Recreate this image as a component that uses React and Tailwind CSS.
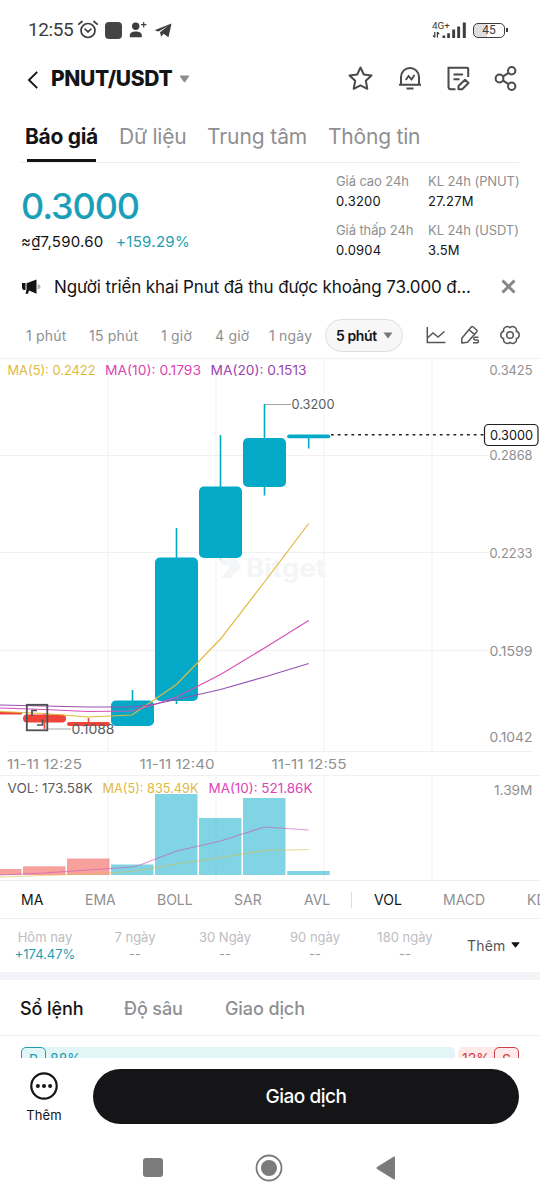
import clsx from 'clsx'

const stats = [
  { label: 'Giá cao 24h', value: '0.3200' },
  { label: 'KL 24h (PNUT)', value: '27.27M' },
  { label: 'Giá thấp 24h', value: '0.0904' },
  { label: 'KL 24h (USDT)', value: '3.5M' },
]

const periods = [
  { label: 'Hôm nay', value: '+174.47%' },
  { label: '7 ngày', value: '--' },
  { label: '30 Ngày', value: '--' },
  { label: '90 ngày', value: '--' },
  { label: '180 ngày', value: '--' },
]

// cx is the middle of the candle; top/bottom/high/low are already in chart pixels
const candles = [
  { cx: 0.5, top: 712, bottom: 714.5, high: 712, low: 714, up: false, vol: 869 },
  { cx: 44.5, top: 714.5, bottom: 722.5, high: 714, low: 729, up: false, vol: 866.3 },
  { cx: 88.5, top: 722, bottom: 726, high: 718, low: 726, up: false, vol: 858.5 },
  { cx: 132.5, top: 700.5, bottom: 726, high: 690, low: 726, up: true, vol: 864.5 },
  { cx: 176.5, top: 557.5, bottom: 701, high: 528, low: 704, up: true, vol: 794 },
  { cx: 220.5, top: 486.5, bottom: 558, high: 435, low: 558.5, up: true, vol: 818 },
  { cx: 264.5, top: 438, bottom: 487, high: 404, low: 495.5, up: true, vol: 798 },
  { cx: 308.7, top: 434.5, bottom: 438.3, high: 435, low: 448.5, up: true, vol: 871 },
]

const priceTicks = [
  { y: 375, label: '0.3425' },
  { y: 460.3, label: '0.2868' },
  { y: 558.2, label: '0.2233' },
  { y: 656, label: '0.1599' },
  { y: 741.5, label: '0.1042' },
]

function ChartText({ x, y, width, fill, children }) {
  return (
    <text x={x} y={y} fill={fill} textLength={width} lengthAdjust="spacingAndGlyphs">
      {children}
    </text>
  )
}

function StatusBar() {
  return (
    <div className="flex h-[60px] items-center pl-[28px] pr-[32px] text-[#3d3d3d]">
      <span className="w-[49px] pt-px font-[Roboto] text-[19px] tracking-[-0.4px]">12:55</span>
      <svg width="22" height="20" viewBox="0 0 22 20" fill="none" stroke="currentColor" strokeWidth="1.7" strokeLinecap="round">
        <circle cx="11" cy="10.5" r="7" />
        <path d="M1.8 4.2 5 1.5M20.2 4.2 17 1.5M8 9.2l3 2.6 3-2.6" />
      </svg>
      <span className="ml-[6px] h-[17px] w-[17px] rounded-[4px] bg-[#444]" />
      <svg className="ml-[7px]" width="18" height="18" viewBox="0 0 18 18" fill="currentColor">
        <circle cx="6.7" cy="5.2" r="3.7" />
        <path d="M.8 16.2v-1.7c0-2.8 2.5-4 6-4s6 1.2 6 4v1.7z" />
        <path d="M14.7 1v5.4M12 3.7h5.4" stroke="currentColor" strokeWidth="1.2" />
      </svg>
      <svg className="ml-[7px]" width="18" height="17" viewBox="0 0 18 17" fill="currentColor">
        <path d="M17.5 1.5 14.5 15.2 9.5 11.7 7.2 14.7 6 10.2 14 4 4.5 9.6.5 8.3z" />
      </svg>

      <div className="ml-auto flex items-center">
        <svg width="35" height="18" viewBox="0 0 35 18" fill="currentColor">
          <text x="0" y="8" fontFamily="Roboto" fontSize="9.5" textLength="18" lengthAdjust="spacingAndGlyphs">4G+</text>
          <path d="M2.8 11v5.5M1 14.5l1.8 1.8M5.4 16.5V11M7.2 13 5.4 11.3" stroke="currentColor" strokeWidth="1.2" fill="none" />
          <path d="M10.5 14.5h2.700v2.500h-2.700zM15.200 12.200h2.700v4.800h-2.700zM20.200 8.500h2.900v8.500h-2.900zM25.200 5.500h2.900v11.500h-2.900zM30.800 1.500h3v15.500h-3z" />
        </svg>
        <div className="ml-[6px] flex h-[15px] w-[32px] items-center justify-center rounded-[5px] border-[1.5px] border-[#3d3d3d] bg-linear-to-r from-[#dedede] from-45% to-white to-45% font-[Roboto] text-[12px]">
          45
        </div>
        <span className="ml-[1px] h-[4px] w-[2px] bg-[#3d3d3d]" />
      </div>
    </div>
  )
}

function Header() {
  return (
    <div className="flex h-[37px] items-center pl-[27px] pr-[22px] text-[#4a4a4d]">
      <svg className="mt-[3px]" width="12" height="20" viewBox="0 0 12 20" fill="none" stroke="#141416" strokeWidth="1.9">
        <path d="M10.200 1.800 2 10l8.200 8.200" />
      </svg>
      <span className="ml-[12px] w-[128px] text-[21px] font-extrabold tracking-[-0.35px] text-[#141416]">PNUT/USDT</span>
      <svg width="11" height="8" viewBox="0 0 11 8" fill="#8d8d90">
        <path d="M1.500.5h8q1 0 .5 1L6.300 6.800q-.8 1-1.600 0L1 1.500Q.5.5 1.500.5z" />
      </svg>

      <div className="ml-auto flex items-center gap-[24px]">
        <svg className="mr-px" width="25" height="25" viewBox="0 0 25 25" fill="none" stroke="currentColor" strokeWidth="2" strokeLinejoin="round">
          <path d="m12.500 1.500 3.300 7 7.700 1-5.700 5.300 1.500 8-6.800-3.500-6.800 3.500 1.500-8L1.500 9.500l7.700-1z" />
        </svg>
        <svg width="24" height="25" viewBox="0 0 24 25" fill="none" stroke="currentColor" strokeWidth="2">
          <path d="M3 18.500V11a9 9 0 0 1 18 0v7.500M1 18.800h22M8.500 22.500h7" />
          <path d="m7.800 14 2.700-4 3 3.500 3-4.500" strokeWidth="1.800" />
        </svg>
        <svg width="24" height="25" viewBox="0 0 24 25" fill="none" stroke="currentColor" strokeWidth="2">
          <path d="M9.500 23.300H5q-2.500 0-2.500-2.500V1.700h18.700q1 0 1 1V11M7.500 8.500h9.500M7.500 13.200h6" />
          <path d="m12.500 20 6.500-6.300 3.500 3.300-6.300 6.300h-3.700z" strokeLinejoin="round" />
        </svg>
        <svg width="24" height="25" viewBox="0 0 24 25" fill="none" stroke="currentColor" strokeWidth="2">
          <circle cx="5.500" cy="12.500" r="3.900" />
          <circle cx="17.700" cy="4.800" r="3.700" />
          <circle cx="17.700" cy="20.200" r="3.700" />
          <path d="m9.100 10.400 5.500-3.600M9.100 14.600l5.500 3.600" />
        </svg>
      </div>
    </div>
  )
}

function Tabs() {
  return (
    <div className="flex h-[65px] text-[21px] leading-[79px] text-[#8f8f92]">
      <div className="ml-[25px] w-[94px] font-bold tracking-[-0.3px] text-[#141416]">
        Báo giá
        <div className="mt-[-17px] ml-[2px] h-[3px] w-[69px] bg-[#141416]" />
      </div>
      <span className="w-[88px] tracking-[-0.2px]">Dữ liệu</span>
      <span className="w-[121px] tracking-[-0.1px]">Trung tâm</span>
      <span className="tracking-[-0.2px]">Thông tin</span>
    </div>
  )
}

function Price() {
  return (
    <div className="mx-[21px] flex h-[107px] justify-between border-t border-[#ececee]">
      <div className="pt-[20px]">
        <div className="text-[36px] leading-[46px] font-medium tracking-[-1.1px] text-[#1b9fb8]">0.3000</div>
        <div className="mt-[2px] flex text-[15px] leading-[22px]">
          <span className="w-[95px] tracking-[0.25px] text-[#141416]">≈₫7,590.60</span>
          <span className="tracking-[0.3px] text-[#1f9eb0]">+159.29%</span>
        </div>
      </div>
      <div className="grid w-[183px] grid-cols-[92px_91px] pt-[8px]">
        {stats.map((item) => (
          <div key={item.label} className="h-[49px] text-[13px] leading-[20px] whitespace-nowrap">
            <div className="tracking-[-0.1px] text-[#8f8f92]">{item.label}</div>
            <div className="tracking-[0.2px] text-[#141416]">{item.value}</div>
          </div>
        ))}
      </div>
    </div>
  )
}

function Notice() {
  return (
    <div className="flex h-[36px] items-center pl-[22px] pr-[24px]">
      <svg width="20" height="16" viewBox="0 0 20 16" fill="#141416">
        <path d="M0 4h3.500v7H1.200L0 9zM4.500 4.200 14.500.5v14.200L7 11.600l-1 3.200H3.500l1-4z" />
        <path d="M15.500 5.200q3 .3 3 2.500t-3 2.500z" fill="#b5b5b8" />
      </svg>
      <span className="ml-[12px] pt-px text-[17px] tracking-[-0.12px] whitespace-nowrap text-[#141416]">
        Người triển khai Pnut đã thu được khoảng 73.000 đ...
      </span>
      <svg className="ml-auto mt-[-2px]" width="15" height="15" viewBox="0 0 15 15" stroke="#85858a" strokeWidth="3">
        <path d="m1.500 1.500 12 12M13.500 1.500l-12 12" />
      </svg>
    </div>
  )
}

function Intervals() {
  return (
    <div className="flex h-[53px] items-center pt-[10px] pb-[3px] pl-[26px] pr-[20px] text-[14px] tracking-[0.2px] whitespace-nowrap text-[#8f8f92]">
      <span className="w-[63px]">1 phút</span>
      <span className="w-[72px]">15 phút</span>
      <span className="w-[54px]">1 giờ</span>
      <span className="w-[54px]">4 giờ</span>
      <span className="w-[56px]">1 ngày</span>
      <div className="flex h-[33px] w-[78px] shrink-0 items-center rounded-full border border-[#dedee0] bg-[#f7f7f8] pl-[10px] font-semibold tracking-[-0.4px] text-[#141416]">
        <span className="w-[47px]">5 phút</span>
        <svg width="10" height="7" viewBox="0 0 10 7" fill="#77777b">
          <path d="M.5.5h9L5 6.500z" />
        </svg>
      </div>
      <div className="ml-auto flex items-center text-[#55555a]">
        <svg width="20" height="18" viewBox="0 0 20 18" fill="none" stroke="currentColor" strokeWidth="1.5">
          <path d="M1.300 1v15.500H19.500M2 11.500l5-4.500 5 4 6.500-5.500" />
        </svg>
        <svg className="ml-[14px]" width="21" height="20" viewBox="0 0 21 20" fill="none" stroke="currentColor" strokeWidth="1.5" strokeLinejoin="round">
          <path d="M1.800 18v-4.800L11 2.200q1-1.200 2.200-.2l3.200 2.700q1.200 1 .2 2.200L7.500 17.300zM9 4.800l5.400 4.600" />
          <path d="M18.500 12.200h-3.500q-1.300 0-1.300 1.400t1.300 1.400h2.200q1.300 0 1.300 1.400t-1.300 1.400h-4.200" strokeWidth="1.400" />
        </svg>
        <svg className="ml-[19px]" width="20" height="20" viewBox="0 0 20 20" fill="none" stroke="currentColor" strokeWidth="1.5" strokeLinejoin="round">
          <path d="M10 2.700A3.750 3.750 0 0 1 16.300 6.350 3.750 3.750 0 0 1 16.300 13.650 3.750 3.750 0 0 1 10 17.300 3.750 3.750 0 0 1 3.700 13.650 3.750 3.750 0 0 1 3.700 6.350 3.750 3.750 0 0 1 10 2.700z" />
          <circle cx="10" cy="10" r="3.300" />
        </svg>
      </div>
    </div>
  )
}

function Chart() {
  return (
    <svg className="block" width="540" height="522" viewBox="0 358 540 522" fontFamily="Inter, sans-serif" fontSize="13">
      <g stroke="#f1f1f3" strokeWidth="1">
        <path d="M0 358.500h540M0 455.500h488M0 552.500h488M0 650.500h488M8 751.500h524M0 775.500h540" />
        <path d="M108 359v392M216 359v392M324 359v392M432 359v392M108 776v104M216 776v104M324 776v104M432 776v104" />
      </g>

      {/* Watermark */}
      <g fill="#f4f5f6">
        <path d="M217 559h9l6 6h-9zM228 557h6q1 0 2 1l4 7q1 2-.5 4L230 578h-9l8-10z" />
        <text x="246" y="577" fontSize="25" fontWeight="700" textLength="80" lengthAdjust="spacingAndGlyphs">Bitget</text>
      </g>

      {candles.map((c) => (
        <g key={c.cx} fill={c.up ? '#04a9c7' : '#f0443a'}>
          <rect x={c.cx - 0.8} y={c.high} width="1.6" height={c.low - c.high} />
          <rect x={c.cx - 21.5} y={c.top} width="43" height={c.bottom - c.top} rx={c.bottom - c.top > 12 ? 5 : (c.bottom - c.top) / 2} />
          <rect x={c.cx - 21.5} y={c.vol} width="42.5" height={875 - c.vol} opacity="0.5" />
        </g>
      ))}

      <g fill="none" strokeWidth="1.2">
        <path d="M0 711.500 44 713.500 88 717 132 715 176.500 684.500 220.500 639 264.500 582 308.700 523.500" stroke="#e0b93e" />
        <path d="M0 708 44 709.500 88 711.500 132 711 150 706 176.500 697 220.500 674.500 264.500 648 308.700 620.500" stroke="#d94fb8" />
        <path d="M0 705 44 706 88 707 132 707 153 704.500 176.500 699.500 220.500 689.500 264.500 677 308.700 663.500" stroke="#9a50b4" />
        <path d="M0 877 88 874 132 871.500 176.500 864 220.500 857.500 264.500 850.500 308.700 849.500" stroke="#e0b93e" opacity="0.55" />
        <path d="M0 875 44 873 88 870 132 867 140 865 176.500 851 220.500 841 264.500 827 308.700 830" stroke="#cc55bb" opacity="0.6" />
      </g>

      {/* High / low markers */}
      <path d="M265 404.500h26M48 729h23" stroke="#a5a5a8" />
      <ChartText x={291.5} y={409} width={43} fill="#5b5b60">0.3200</ChartText>
      <ChartText x={71.5} y={734} width={43} fill="#5b5b60">0.1088</ChartText>
      <g fill="none" stroke="#4f4f54">
        <rect x="26.800" y="704.800" width="20.500" height="25.500" strokeWidth="1.800" />
        <path d="M32 716v-5.500h5M42.500 719.500v5.500h-5.500" strokeWidth="1.700" />
      </g>

      {/* Last price */}
      <path d="M331 434.700h153" stroke="#222" strokeWidth="1.5" strokeDasharray="2.8 4" />
      <rect x="484.500" y="424.500" width="53.500" height="21" rx="4" fill="#fff" stroke="#222" strokeWidth="1.2" />
      <ChartText x={490} y={440} width={43} fill="#141416">0.3000</ChartText>

      {priceTicks.map((t) => (
        <ChartText key={t.label} x={489.5} y={t.y} width={43} fill="#8f8f92">{t.label}</ChartText>
      ))}
      <ChartText x={494} y={795} width={38.5} fill="#8f8f92">1.39M</ChartText>
      <ChartText x={7} y={768.5} width={75} fill="#8f8f92">11-11 12:25</ChartText>
      <ChartText x={139.5} y={768.5} width={75} fill="#8f8f92">11-11 12:40</ChartText>
      <ChartText x={271.5} y={768.5} width={75} fill="#8f8f92">11-11 12:55</ChartText>

      <ChartText x={7.5} y={374.7} width={88} fill="#dfb93f">MA(5): 0.2422</ChartText>
      <ChartText x={105} y={374.7} width={96} fill="#dc45b4">MA(10): 0.1793</ChartText>
      <ChartText x={210.5} y={374.7} width={96} fill="#9a45b0">MA(20): 0.1513</ChartText>
      <ChartText x={7.5} y={792.7} width={85} fill="#5b5b60">VOL: 173.58K</ChartText>
      <ChartText x={102.5} y={792.7} width={96} fill="#dfb93f">MA(5): 835.49K</ChartText>
      <ChartText x={208.5} y={792.7} width={104} fill="#dc45b4">MA(10): 521.86K</ChartText>
    </svg>
  )
}

function Indicators() {
  return (
    <div className="flex h-[39px] items-center overflow-hidden border-y border-[#eeeef0] pl-[21px] text-[14px] whitespace-nowrap text-[#8f8f92]">
      <span className="w-[64px] shrink-0 text-[#141416]">MA</span>
      <span className="w-[72px] shrink-0">EMA</span>
      <span className="w-[77px] shrink-0">BOLL</span>
      <span className="w-[70px] shrink-0">SAR</span>
      <span className="w-[47px] shrink-0">AVL</span>
      <span className="mr-[22px] h-[16px] w-px shrink-0 bg-[#dddde0]" />
      <span className="w-[69px] shrink-0 text-[#141416]">VOL</span>
      <span className="w-[84px] shrink-0">MACD</span>
      <span className="shrink-0">KDJ</span>
    </div>
  )
}

function Performance() {
  return (
    <div className="flex h-[61px] border-b-8 border-[#f2f3f6] text-center text-[13px]">
      {periods.map((p, i) => (
        <div key={p.label} className="w-[90px] pt-[9px]">
          <div className="leading-[18px] text-[#bdbdc0]">{p.label}</div>
          <div className={clsx('leading-[17px]', i === 0 ? 'text-[#1f9eb0]' : 'text-[#a0a0a3]')}>{p.value}</div>
        </div>
      ))}
      <div className="ml-[17px] flex items-center gap-[5px] pb-px text-[14px] tracking-[0.2px] text-[#55555a]">
        Thêm
        <svg width="9" height="6" viewBox="0 0 9 6" fill="#141416">
          <path d="M1 .3h7q1 0 .4.700L5 5.200q-.5.500-1 0L.6 1Q0 .3 1 .3z" />
        </svg>
      </div>
    </div>
  )
}

function OrderBook() {
  return (
    <>
      <div className="flex h-[56px] items-center border-b border-[#f0f0f2] pt-px pl-[20px] text-[18px] font-medium tracking-[-0.1px] text-[#8f8f92]">
        <span className="w-[104px] text-[#141416]">Sổ lệnh</span>
        <span className="w-[101px]">Độ sâu</span>
        <span>Giao dịch</span>
      </div>
      {/* Buy / sell ratio, scrolled partly under the action bar */}
      <div className="flex h-[22px] items-start gap-[3px] overflow-hidden px-[21px] pt-[11px] text-[14px] leading-[23px]">
        <div className="flex w-[435px] rounded-[5px] bg-[#e2f5f7] text-[#1f9eb0]">
          <span className="mr-[4px] h-[22px] w-[25px] rounded-[5px] border-[1.5px] border-[#1f9eb0] text-center">B</span>
          88%
        </div>
        <div className="flex w-[61px] justify-end rounded-[5px] bg-[#fdeae9] text-[#cf4049]">
          12%
          <span className="ml-[4px] h-[22px] w-[25px] rounded-[5px] border-[1.5px] border-[#cf4049] text-center">S</span>
        </div>
      </div>
    </>
  )
}

function ActionBar() {
  return (
    <div className="flex h-[77px] bg-white pt-[11px] pl-[21px]">
      <div className="flex w-[46px] flex-col items-center text-[13px] text-[#141416]">
        <svg className="mt-[3px]" width="28" height="28" viewBox="0 0 28 28" fill="#141416">
          <circle cx="14" cy="14" r="12.700" fill="none" stroke="#141416" strokeWidth="2.2" />
          <circle cx="7.900" cy="14" r="2" />
          <circle cx="14" cy="14" r="2" />
          <circle cx="20.100" cy="14" r="2" />
        </svg>
        <span className="mt-[5px] leading-[20px] tracking-[0.1px]">Thêm</span>
      </div>
      <button className="ml-[26px] h-[55px] w-[426px] rounded-full bg-[#151517] pt-px text-[19px] font-medium tracking-[-0.45px] text-white">
        Giao dịch
      </button>
    </div>
  )
}

function SystemNav() {
  return (
    <div className="flex h-[65px] items-center pl-[143px] text-[#7b7b7b]">
      <span className="h-[19px] w-[20px] rounded-[3px] bg-[#7b7b7b]" />
      <svg className="ml-[92px]" width="28" height="28" viewBox="0 0 28 28" fill="currentColor">
        <circle cx="14" cy="14" r="12.500" fill="none" stroke="currentColor" strokeWidth="1.8" />
        <circle cx="14" cy="14" r="8" />
      </svg>
      <svg className="ml-[93px]" width="20" height="24" viewBox="0 0 20 24" fill="currentColor">
        <path d="M17.500.8q1.500-.8 1.500.8v20.800q0 1.600-1.500.8L1 13q-1.200-1 0-2z" />
      </svg>
    </div>
  )
}

export default function App() {
  return (
    <div className="h-[1200px] w-[540px] overflow-hidden bg-white font-[Inter,sans-serif]">
      <StatusBar />
      <Header />
      <Tabs />
      <Price />
      <Notice />
      <Intervals />
      <Chart />
      <Indicators />
      <Performance />
      <OrderBook />
      <ActionBar />
      <SystemNav />
    </div>
  )
}
